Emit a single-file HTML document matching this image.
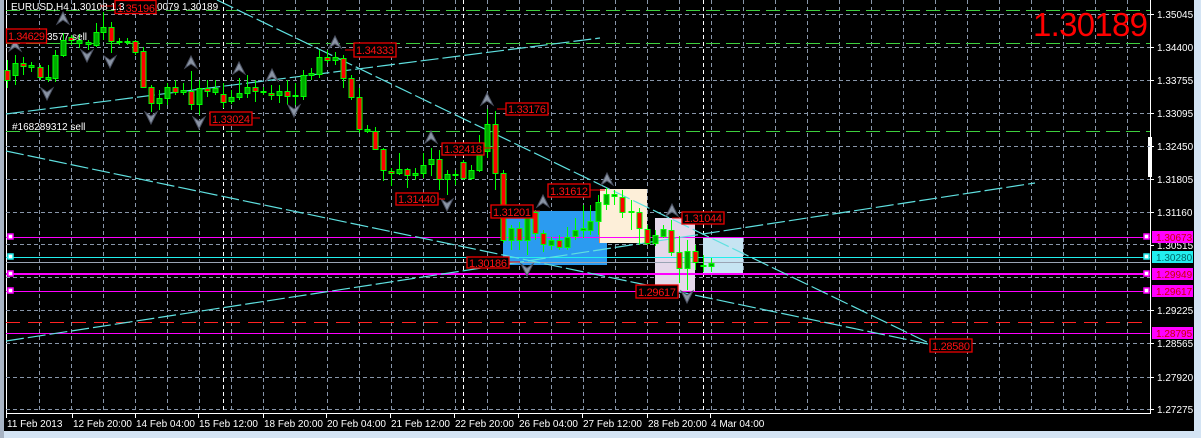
<!DOCTYPE html>
<html><head><meta charset="utf-8"><style>
html,body{margin:0;padding:0;background:#d4e4f4;width:1201px;height:438px;overflow:hidden}
svg{display:block}
text{font-family:"Liberation Sans",sans-serif}
</style></head><body>
<svg id="s" width="1201" height="438" xmlns="http://www.w3.org/2000/svg">
<rect x="0" y="0" width="1201" height="438" fill="#d4e4f4"/>
<rect x="0" y="0" width="4" height="438" fill="#a8b4c4"/>
<rect x="4" y="0" width="1190" height="431" fill="#000"/>
<line x1="6.5" y1="0" x2="6.5" y2="413" stroke="#fff" stroke-width="1"/>
<line x1="1150.5" y1="0" x2="1150.5" y2="413" stroke="#fff"/>
<line x1="6" y1="413.5" x2="1151" y2="413.5" stroke="#fff"/>
<rect x="1148" y="137" width="4" height="40" fill="#fff"/>
<g id="grid" stroke="#8896aa" stroke-dasharray="4,3" stroke-width="1"></g>
<g stroke="#fff" stroke-dasharray="4,3">
<line x1="223.5" y1="0" x2="223.5" y2="413"/><line x1="463.5" y1="0" x2="463.5" y2="413"/><line x1="703.5" y1="0" x2="703.5" y2="413"/>
</g>
<g stroke="#3ecf3e" stroke-dasharray="14,6" stroke-width="1">
<line x1="6" y1="10.5" x2="1150" y2="10.5"/><line x1="6" y1="43.5" x2="1150" y2="43.5"/><line x1="6" y1="131.5" x2="1150" y2="131.5"/>
</g>
<rect x="503" y="211" width="104" height="54" fill="#2b9bf0"/>
<rect x="599" y="211" width="8" height="32" fill="#ef8a4a"/>
<rect x="600" y="189" width="47" height="54" fill="#fdefd9"/>
<rect x="655" y="218" width="40" height="73" fill="#e5d8ea"/>
<rect x="703" y="238" width="40" height="36" fill="#c6e4f2"/>
<line x1="6" y1="237.5" x2="1150" y2="237.5" stroke="#f0f" />
<line x1="6" y1="257.5" x2="1150" y2="257.5" stroke="#2ee" />
<line x1="6" y1="262.5" x2="1150" y2="262.5" stroke="#9aa4b4" />
<line x1="6" y1="274" x2="1150" y2="274" stroke="#f0f" stroke-width="2"/>
<line x1="6" y1="291.5" x2="1150" y2="291.5" stroke="#f0f" />
<line x1="6" y1="333.5" x2="1150" y2="333.5" stroke="#f0f" />
<line x1="6" y1="322.5" x2="1150" y2="322.5" stroke="#f22" stroke-dasharray="14,8"/>
<g fill="#fff" stroke="#f0f" stroke-width="1.5">
<rect x="8" y="234" width="5" height="5"/><rect x="8" y="271" width="5" height="5"/><rect x="8" y="288" width="5" height="5"/>
<rect x="1144" y="234" width="5" height="5"/><rect x="1144" y="271" width="5" height="5"/><rect x="1144" y="288" width="5" height="5"/>
</g>
<rect x="8" y="254" width="5" height="5" fill="#fff" stroke="#2ee" stroke-width="1.5"/>
<rect x="1144" y="254" width="5" height="5" fill="#fff" stroke="#2ee" stroke-width="1.5"/>
<g stroke="#5fe0e0" stroke-width="1.2" stroke-dasharray="18,4">
<line x1="217" y1="0" x2="933" y2="345"/>
<line x1="6" y1="151" x2="933" y2="345"/>
<line x1="6" y1="341" x2="1035" y2="183"/>
<line x1="6" y1="114" x2="600" y2="38"/>
</g>
<line x1="933" y1="345" x2="972" y2="345" stroke="#f22"/>
<g id="cd"></g>
<g id="ar"></g>
<g font-size="11" fill="#f11">
<g fill="#000" stroke="#e00" stroke-width="1.3">
<rect x="115" y="0.5" width="41" height="13"/>
<rect x="6.5" y="29" width="40" height="14"/>
<rect x="354" y="43" width="42" height="14"/>
<rect x="210" y="112" width="42" height="13"/>
<rect x="506" y="103" width="42" height="12"/>
<rect x="442" y="143" width="42" height="12"/>
<rect x="396" y="193" width="42" height="12"/>
<rect x="548" y="184" width="42" height="13"/>
<rect x="491" y="205" width="42" height="13"/>
<rect x="467" y="257" width="42" height="11"/>
<rect x="682" y="212" width="42" height="12"/>
<rect x="636" y="285" width="42" height="13"/>
<rect x="930" y="339" width="42" height="13"/>
</g>
<g stroke="#e00"><line x1="345" y1="50" x2="354" y2="50"/><line x1="497" y1="109" x2="506" y2="109"/><line x1="484" y1="148" x2="495" y2="148"/><line x1="438" y1="199" x2="445" y2="199"/><line x1="590" y1="190" x2="605" y2="190"/><line x1="533" y1="211" x2="540" y2="211"/><line x1="509" y1="262" x2="520" y2="262"/><line x1="672" y1="218" x2="682" y2="218"/><line x1="252" y1="118" x2="260" y2="118"/><line x1="100" y1="6" x2="115" y2="6"/></g>
<text x="117" y="12" textLength="38">1.35196</text>
<text x="8" y="40" textLength="37">1.34629</text>
<text x="356" y="54" textLength="38">1.34333</text>
<text x="212" y="123" textLength="38">1.33024</text>
<text x="508" y="113" textLength="38">1.33176</text>
<text x="444" y="153" textLength="38">1.32418</text>
<text x="398" y="203" textLength="38">1.31440</text>
<text x="550" y="195" textLength="38">1.31612</text>
<text x="493" y="216" textLength="38">1.31201</text>
<text x="469" y="267" textLength="38">1.30186</text>
<text x="684" y="222" textLength="38">1.31044</text>
<text x="638" y="296" textLength="38">1.29617</text>
<text x="932" y="350" textLength="38">1.28580</text>
</g>
<g font-size="10" fill="#fff">
<text x="11" y="10">EURUSD,H4  1.30108 1.3</text>
<text x="157" y="10">0079 1.30189</text>
<text x="47" y="40">3577 sell</text>
<text x="12" y="130">#168289312 sell</text>
</g>
<text x="1033" y="36" font-size="33" fill="#f00" textLength="115">1.30189</text>
<g id="pa" font-size="10" fill="#fff"></g>
<g font-size="10">
<rect x="1152" y="231" width="41" height="12" fill="#f0f"/><text x="1156" y="241" fill="#c00">1.30673</text>
<rect x="1152" y="251" width="41" height="12" fill="#2ee"/><text x="1156" y="261" fill="#066">1.30280</text>
<rect x="1152" y="268" width="41" height="12" fill="#f0f"/><text x="1156" y="278" fill="#c00">1.29949</text>
<rect x="1152" y="285" width="41" height="12" fill="#f0f"/><text x="1156" y="295" fill="#c00">1.29617</text>
<rect x="1152" y="327" width="41" height="12" fill="#f0f"/><text x="1156" y="337" fill="#c00">1.28795</text>
</g>
<g id="ta" font-size="10" fill="#fff"></g>
</svg>
<script>
var NS="http://www.w3.org/2000/svg";
function el(p,t,a){var e=document.createElementNS(NS,t);for(var k in a)e.setAttribute(k,a[k]);p.appendChild(e);return e;}
var g=document.getElementById('grid');
[14,47,80,113,146,179,212,244,277,310,343,377,409].forEach(function(y){el(g,'line',{x1:6,y1:y+.5,x2:1150,y2:y+.5});});
for(var x=39;x<1150;x+=32){el(g,'line',{x1:x+.5,y1:0,x2:x+.5,y2:413});}
var pa=document.getElementById('pa');
[["1.35045",14],["1.34400",47],["1.33755",80],["1.33095",113],["1.32450",146],["1.31805",179],["1.31160",212],["1.30515",245],["1.29225",310],["1.28565",343],["1.27920",377],["1.27275",409]].forEach(function(a){
el(pa,'line',{x1:1150,y1:a[1]+.5,x2:1154,y2:a[1]+.5,stroke:'#fff'});var t=el(pa,'text',{x:1157,y:a[1]+4});t.textContent=a[0];});
var ta=document.getElementById('ta');
[["11 Feb 2013",6],["12 Feb 20:00",72],["14 Feb 04:00",135],["15 Feb 12:00",198],["18 Feb 20:00",263],["20 Feb 04:00",326],["21 Feb 12:00",390],["22 Feb 20:00",454],["26 Feb 04:00",518],["27 Feb 12:00",582],["28 Feb 20:00",647],["4 Mar 04:00",710]].forEach(function(a){
el(ta,'line',{x1:a[1]+.5,y1:413,x2:a[1]+.5,y2:418,stroke:'#fff'});var t=el(ta,'text',{x:a[1]+1,y:427});t.textContent=a[0];});
var C=[[7,70,80,60,88,'r'],[15,63,75,55,85,'g'],[23,63,66,57,75,'r'],[31,65,67,62,72,'g'],[40,67,77,65,80,'r'],[48,77,79,65,82,'g'],[55,55,78,50,82,'g'],[63,40,55,33,57,'g'],[71,37,40,35,45,'r'],[79,40,43,34,48,'g'],[88,42,44,40,50,'g'],[96,32,45,23,47,'g'],[103,27,32,12,40,'g'],[111,27,41,22,53,'r'],[119,41,42,38,45,'g'],[127,41,42,38,45,'g'],[135,41,52,40,55,'r'],[143,51,87,47,88,'r'],[151,87,103,85,112,'r'],[159,98,103,90,110,'g'],[167,87,98,83,105,'g'],[175,87,92,80,95,'r'],[183,90,92,83,95,'g'],[191,91,104,71,110,'r'],[199,88,104,80,115,'g'],[207,88,91,80,97,'r'],[215,88,92,80,95,'g'],[223,94,102,83,108,'r'],[231,97,101,90,104,'g'],[239,93,97,78,100,'g'],[247,87,93,75,98,'g'],[255,87,91,80,102,'r'],[263,91,92,87,95,'g'],[271,93,95,85,100,'r'],[279,91,95,85,103,'g'],[287,91,96,80,105,'r'],[295,95,96,83,105,'g'],[303,75,96,70,100,'g'],[311,73,75,68,80,'g'],[319,57,74,50,78,'g'],[327,57,60,50,63,'r'],[335,57,60,52,65,'g'],[343,58,78,55,88,'r'],[351,78,97,75,100,'r'],[359,97,129,88,133,'r'],[367,129,131,125,133,'g'],[375,131,149,127,150,'r'],[383,149,170,148,181,'r'],[391,171,173,168,186,'r'],[399,169,173,153,175,'g'],[407,169,175,168,188,'r'],[415,173,175,168,180,'g'],[423,165,173,153,178,'g'],[431,159,164,148,176,'g'],[439,159,179,150,190,'r'],[447,174,179,170,195,'g'],[455,174,175,170,185,'g'],[463,162,178,160,180,'r'],[471,170,178,165,180,'g'],[479,155,170,135,172,'g'],[487,124,151,109,158,'g'],[495,124,173,111,190,'r'],[503,173,240,170,243,'r'],[511,228,240,225,250,'g'],[519,228,240,222,250,'r'],[527,217,240,210,255,'g'],[535,212,233,210,240,'r'],[543,233,244,230,252,'r'],[551,240,245,237,250,'g'],[559,240,247,235,250,'r'],[567,237,247,227,250,'g'],[575,230,236,218,240,'g'],[583,228,230,205,238,'g'],[590,221,230,205,235,'g'],[598,202,221,195,235,'g'],[606,194,204,188,210,'g'],[614,194,196,190,205,'g'],[622,197,212,190,218,'r'],[631,211,212,200,230,'g'],[639,212,228,208,245,'r'],[647,229,243,225,245,'r'],[655,235,243,230,246,'g'],[663,229,236,225,238,'g'],[671,230,252,220,256,'r'],[679,252,268,236,283,'r'],[687,251,268,240,290,'g'],[695,251,262,245,270,'r'],[703,265,266,255,272,'g'],[711,263,266,258,272,'g']];
var cd=document.getElementById('cd');
C.forEach(function(c){var x=c[0];el(cd,'line',{x1:x+.5,y1:c[3],x2:x+.5,y2:c[4],stroke:'#0f0'});
var h=Math.max(1,c[2]-c[1]);el(cd,'rect',{x:x-2,y:c[1]+.5,width:5,height:h,fill:c[5]=='r'?'#f00':'#0a0',stroke:'#0f0'});});
var ar=document.getElementById('ar');
function arrow(x,y,up){var p=up?'M'+(x-6)+','+(y+6)+' L'+x+','+(y-6)+' L'+(x+6)+','+(y+6)+' L'+x+','+(y+2)+'Z':'M'+(x-6)+','+(y-6)+' L'+x+','+(y+6)+' L'+(x+6)+','+(y-6)+' L'+x+','+(y-2)+'Z';
el(ar,'path',{d:p,fill:'#8a94a4',stroke:'#4a5060','stroke-width':1});}
[[63,18],[15,45],[191,62],[239,68],[272,75],[335,42],[431,137],[487,99],[543,201],[607,179],[672,210]].forEach(function(a){arrow(a[0],a[1],true);});
[[87,56],[110,62],[47,94],[151,118],[199,123],[294,111],[447,205],[527,270],[687,297]].forEach(function(a){arrow(a[0],a[1],false);});
</script>
</body></html>
